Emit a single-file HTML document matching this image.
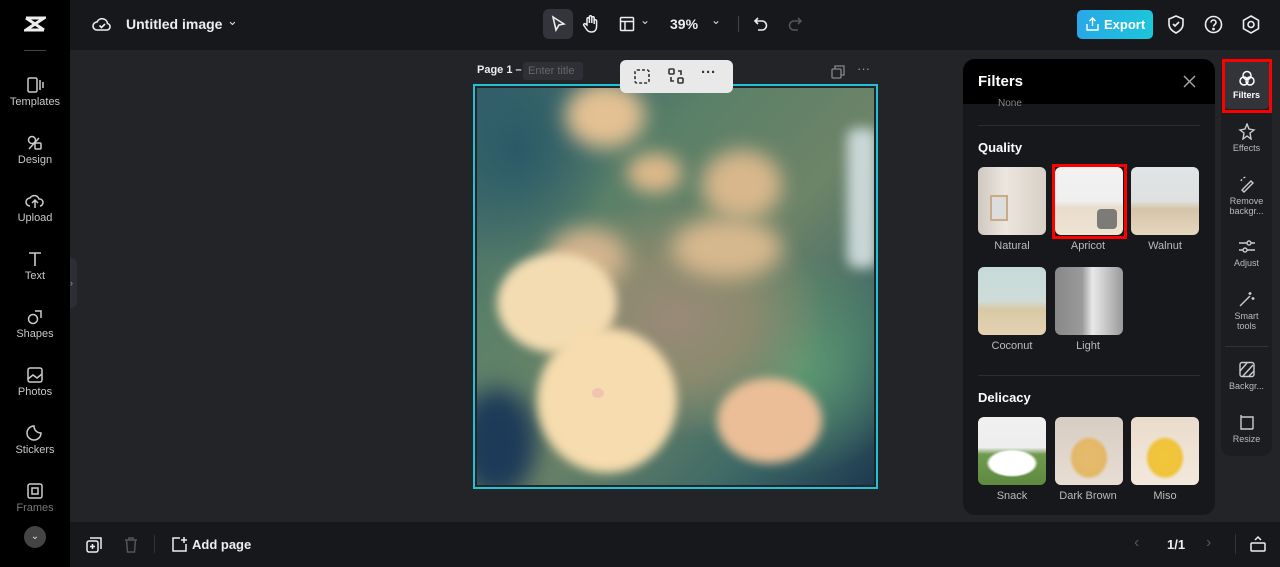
<!DOCTYPE html>
<html><head><meta charset="utf-8"><style>
*{box-sizing:border-box;margin:0;padding:0}
body{width:1280px;height:567px;overflow:hidden;background:#232428;font-family:"Liberation Sans",sans-serif;color:#ddd;position:relative}
.abs{position:absolute}
#top{left:70px;top:0;width:1210px;height:50px;background:#17181c}
#left{left:0;top:0;width:70px;height:567px;background:#000}
#bottom{left:70px;top:522px;width:1210px;height:45px;background:#17181c}
.nav{position:absolute;left:0;width:70px;text-align:center;font-size:11px;color:#c8c8c8}
.nav svg{display:block;margin:0 auto 3px}
.panel{left:963px;top:59px;width:252px;height:456px;background:#17181c;border-radius:12px;overflow:hidden}
.ph{height:45px;background:#000;padding:14px 15px;font-weight:bold;font-size:15px;color:#fff}
.th{position:absolute;width:68px;height:68px;border-radius:6px}
.lb{position:absolute;width:76px;text-align:center;font-size:11px;color:#bbb}
.sec{position:absolute;left:15px;font-weight:bold;font-size:13px;color:#fff}
.rs{left:1221px;top:59px;width:51px;height:397px;background:#1c1d21;border-radius:10px}
.ri{position:absolute;left:0;width:51px;text-align:center;font-size:9px;color:#bbb;line-height:10px}
.ri svg{display:block;margin:0 auto 3px}
.b{position:absolute;border-radius:50%}
</style></head><body>
<div id="left" class="abs">
 <svg class="abs" style="left:24px;top:14px" width="22" height="20" viewBox="0 0 22 20" fill="none" stroke="#eee" stroke-width="3"><path d="M2 4h18L2 16h18M2 4l18 12"/></svg>
 <div class="abs" style="left:24px;top:50px;width:22px;height:1px;background:#444"></div>
 <div class="nav" style="top:77px"><svg width="18" height="16" viewBox="0 0 18 16" fill="none" stroke="#ccc" stroke-width="1.5"><rect x="2" y="1" width="9" height="14" rx="1.5"/><path d="M14 3v10M17 5v6"/></svg>Templates</div>
 <div class="nav" style="top:135px"><svg width="18" height="16" viewBox="0 0 18 16" fill="none" stroke="#ccc" stroke-width="1.5"><circle cx="6" cy="5" r="3.5"/><rect x="9" y="8" width="6" height="6" rx="1"/><path d="M3 14l10-11"/></svg>Design</div>
 <div class="nav" style="top:193px"><svg width="20" height="16" viewBox="0 0 20 16" fill="none" stroke="#ccc" stroke-width="1.5"><path d="M5 13a4 4 0 010-8 5 5 0 019 1 3.5 3.5 0 011 7M10 15V8M7 10l3-3 3 3"/></svg>Upload</div>
 <div class="nav" style="top:251px"><svg width="18" height="16" viewBox="0 0 18 16" fill="none" stroke="#ccc" stroke-width="1.6"><path d="M3 2h12M9 2v13"/></svg>Text</div>
 <div class="nav" style="top:309px"><svg width="18" height="16" viewBox="0 0 18 16" fill="none" stroke="#ccc" stroke-width="1.5"><circle cx="7" cy="10" r="4.5"/><path d="M9 2l6 0 0 7"/></svg>Shapes</div>
 <div class="nav" style="top:367px"><svg width="18" height="16" viewBox="0 0 18 16" fill="none" stroke="#ccc" stroke-width="1.5"><rect x="2" y="1" width="14" height="14" rx="2"/><path d="M2 12l5-4 4 3 5-4"/></svg>Photos</div>
 <div class="nav" style="top:425px"><svg width="18" height="16" viewBox="0 0 18 16" fill="none" stroke="#ccc" stroke-width="1.5"><path d="M15 8a7 7 0 11-7-7c0 4 3 7 7 7z"/></svg>Stickers</div>
 <div class="nav" style="top:483px;color:#777"><svg width="18" height="16" viewBox="0 0 18 16" fill="none" stroke="#ccc" stroke-width="1.5"><rect x="2" y="1" width="14" height="14" rx="2"/><rect x="6" y="5" width="6" height="6"/></svg>Frames</div>
 <div class="abs" style="left:24px;top:526px;width:22px;height:22px;border-radius:50%;background:#444;color:#ddd;font-size:10px;text-align:center;line-height:22px">⌄</div>
</div>
<div class="abs" style="left:70px;top:258px;width:7px;height:50px;background:#2d2e33;border-radius:0 6px 6px 0;color:#999;font-size:9px;line-height:50px">›</div>
<div id="top" class="abs">
 <svg class="abs" style="left:22px;top:15px" width="20" height="18" viewBox="0 0 20 18" fill="none" stroke="#eee" stroke-width="1.6"><path d="M5 15a4 4 0 010-8 5.5 5.5 0 0110.5 1.5A3.3 3.3 0 0115 15z"/><path d="M7.5 10.5l2 2 3.5-3.5"/></svg>
 <div class="abs" style="left:56px;top:16px;font-weight:bold;font-size:14px;color:#eee">Untitled image</div>
 <div class="abs" style="left:157px;top:13px;font-size:13px;color:#ddd">⌄</div>
 <div class="abs" style="left:473px;top:9px;width:30px;height:30px;background:#34353b;border-radius:6px"></div>
 <svg class="abs" style="left:480px;top:15px" width="16" height="18" viewBox="0 0 16 18" fill="none" stroke="#eee" stroke-width="1.6"><path d="M3 2l11 7-5 1-3 5z"/></svg>
 <svg class="abs" style="left:512px;top:14px" width="18" height="20" viewBox="0 0 18 20" fill="none" stroke="#eee" stroke-width="1.5"><path d="M5 11V5a1.2 1.2 0 012.4 0v4V3a1.2 1.2 0 012.4 0v6V4a1.2 1.2 0 012.4 0v6V7a1.2 1.2 0 012.4 0v5c0 4-2 6-5 6s-4-1-6-4l-2-3a1.2 1.2 0 012-1z"/></svg>
 <svg class="abs" style="left:549px;top:16px" width="16" height="16" viewBox="0 0 16 16" fill="none" stroke="#eee" stroke-width="1.5"><rect x="1.5" y="1.5" width="13" height="13" rx="1"/><path d="M1.5 5.5h13M6 5.5v9"/></svg>
 <div class="abs" style="left:570px;top:13px;font-size:12px;color:#ddd">⌄</div>
 <div class="abs" style="left:600px;top:16px;font-weight:bold;font-size:14px;color:#eee">39%</div>
 <div class="abs" style="left:641px;top:13px;font-size:12px;color:#ddd">⌄</div>
 <div class="abs" style="left:668px;top:16px;width:1px;height:16px;background:#444"></div>
 <svg class="abs" style="left:683px;top:16px" width="16" height="16" viewBox="0 0 16 16" fill="none" stroke="#eee" stroke-width="1.6"><path d="M5 2L2 5l3 3M2 5h7a4.5 4.5 0 010 9H5"/></svg>
 <svg class="abs" style="left:717px;top:16px" width="16" height="16" viewBox="0 0 16 16" fill="none" stroke="#555" stroke-width="1.6"><path d="M11 2l3 3-3 3M14 5H7a4.5 4.5 0 000 9h4"/></svg>
 <div class="abs" style="left:1007px;top:10px;width:76px;height:29px;background:linear-gradient(90deg,#2aa7e8,#1cc6d9);border-radius:5px;color:#fff;font-weight:bold;font-size:13px;padding:7px 0 0 27px">Export</div>
 <svg class="abs" style="left:1016px;top:17px" width="13" height="14" viewBox="0 0 13 14" fill="none" stroke="#fff" stroke-width="1.4"><path d="M6.5 9V1M3.5 4l3-3 3 3M1 7v6h11V7"/></svg>
 <svg class="abs" style="left:1097px;top:15px" width="18" height="19" viewBox="0 0 18 19" fill="none" stroke="#eee" stroke-width="1.6"><path d="M9 1l7 3v5c0 4-3 7-7 9-4-2-7-5-7-9V4z"/><path d="M6 9l2 2 4-4"/></svg>
 <svg class="abs" style="left:1134px;top:15px" width="19" height="19" viewBox="0 0 19 19" fill="none" stroke="#eee" stroke-width="1.6"><circle cx="9.5" cy="9.5" r="8"/><path d="M7 7.5a2.5 2.5 0 115 0c0 2-2.5 2-2.5 4"/><circle cx="9.5" cy="14" r=".6" fill="#eee"/></svg>
 <svg class="abs" style="left:1172px;top:15px" width="18" height="19" viewBox="0 0 18 19" fill="none" stroke="#eee" stroke-width="1.6"><path d="M9 1l7.5 4.3v8.4L9 18 1.5 13.7V5.3z"/><circle cx="9" cy="9.5" r="3"/></svg>
</div>
<!-- image -->
<div class="abs" style="left:473px;top:84px;width:405px;height:405px;border:2px solid #22c1d6;padding:2px;background:#232428">
<div style="position:relative;width:100%;height:100%;overflow:hidden;background:
radial-gradient(ellipse 150px 120px at 50% 58%,#9a8a78 0,#8a8a6e 50%,transparent 100%),
radial-gradient(ellipse 120px 110px at 80% 70%,#5e9a72 0,transparent 100%),
radial-gradient(ellipse 100px 120px at 10% 15%,#2a5a68 0,transparent 100%),
linear-gradient(135deg,#35606a 0,#5a8068 30%,#6d8468 55%,#3f6a66 80%,#1d3a50 100%)">
 <div class="b" style="left:88px;top:-5px;width:80px;height:65px;background:#e4c193;filter:blur(10px)"></div>
 <div class="b" style="left:150px;top:65px;width:55px;height:40px;background:#dcb88b;filter:blur(9px)"></div>
 <div class="b" style="left:225px;top:62px;width:80px;height:70px;background:#d8b78c;filter:blur(10px)"></div>
 <div class="b" style="left:195px;top:130px;width:110px;height:60px;background:#d7b88e;filter:blur(11px)"></div>
 <div class="b" style="left:70px;top:140px;width:80px;height:60px;background:#d3b48e;filter:blur(11px)"></div>
 <div class="b" style="left:370px;top:40px;width:30px;height:140px;border-radius:10px;background:#c9d6d6;filter:blur(6px)"></div>
 <div class="b" style="left:-20px;top:300px;width:80px;height:110px;background:#1d3a58;filter:blur(12px)"></div>
 <div class="b" style="left:20px;top:165px;width:120px;height:100px;background:#f4dcb2;filter:blur(5px)"></div>
 <div class="b" style="left:60px;top:240px;width:140px;height:145px;background:#f6dcae;filter:blur(5px)"></div>
 <div class="b" style="left:240px;top:290px;width:105px;height:85px;background:#ebbe97;filter:blur(5px)"></div>
 <div class="b" style="left:115px;top:300px;width:12px;height:10px;background:#f0c4b0"></div>
</div></div>
<!-- page header -->
<div class="abs" style="left:477px;top:64px;font-weight:bold;font-size:11px;color:#eee">Page 1 –</div>
<div class="abs" style="left:523px;top:62px;width:60px;height:18px;background:#2f3035;border-radius:3px;font-size:11px;color:#666;padding:3px 0 0 5px">Enter title</div>
<div class="abs" style="left:620px;top:60px;width:113px;height:33px;background:#e9e9ea;border-radius:6px"></div>
<svg class="abs" style="left:633px;top:68px" width="18" height="17" viewBox="0 0 18 17" fill="none" stroke="#333" stroke-width="1.6" stroke-dasharray="3 2"><rect x="2" y="2" width="14" height="13" rx="2"/></svg>
<svg class="abs" style="left:668px;top:68px" width="16" height="16" viewBox="0 0 16 16" fill="none" stroke="#333" stroke-width="1.6"><rect x="1" y="1" width="5" height="5" rx="1"/><rect x="10" y="10" width="5" height="5" rx="1"/><path d="M10 3h3v4M6 13H3V9"/></svg>
<div class="abs" style="left:701px;top:64px;font-weight:bold;font-size:15px;color:#333">···</div>
<svg class="abs" style="left:831px;top:65px" width="14" height="14" viewBox="0 0 14 14" fill="none" stroke="#888" stroke-width="1.3"><rect x="1" y="4" width="9" height="9" rx="1"/><path d="M4 4V1h9v9h-3"/></svg>
<div class="abs" style="left:857px;top:61px;font-size:13px;color:#999">···</div>
<!-- filter panel -->
<div class="panel abs">
 <div class="ph">Filters</div>
 <svg class="abs" style="left:220px;top:16px" width="13" height="13" viewBox="0 0 13 13" stroke="#aaa" stroke-width="1.4"><path d="M1 1l11 11M12 1L1 12"/></svg>
 <div class="abs" style="left:35px;top:39px;font-size:10px;color:#888">None</div>
 <div class="abs" style="left:15px;top:66px;width:222px;height:1px;background:#2c2d31"></div>
 <div class="sec" style="top:81px">Quality</div>
 <div class="th" style="left:15px;top:108px;background:linear-gradient(90deg,#cfc8c0,#ece6de 40%,#d8d0c6);"><div style="position:absolute;left:12px;top:28px;width:18px;height:26px;border:2px solid #c8ac86;background:#ddd"></div></div>
 <div class="th" style="left:92px;top:108px;background:linear-gradient(180deg,#f2f2f2 0,#efefef 50%,#e8dccb 60%,#efe3d3)"><div style="position:absolute;right:6px;bottom:6px;width:20px;height:20px;border-radius:4px;background:#7d7b77"></div></div>
 <div class="abs" style="left:89px;top:105px;width:75px;height:75px;border:3px solid #f00"></div>
 <div class="th" style="left:168px;top:108px;background:linear-gradient(180deg,#e0e4e5 0,#dfe1e0 50%,#d5c4a8 62%,#e5d6be)"></div>
 <div class="lb" style="left:11px;top:181px">Natural</div>
 <div class="lb" style="left:87px;top:181px">Apricot</div>
 <div class="lb" style="left:164px;top:181px">Walnut</div>
 <div class="th" style="left:15px;top:208px;background:linear-gradient(180deg,#c5dbd9 0,#cfdcd8 50%,#d8c9a6 62%,#e4d2b2)"></div>
 <div class="th" style="left:92px;top:208px;background:linear-gradient(90deg,#888 0,#9a9a9a 40%,#e8e8e8 55%,#d0d0d0 70%,#999)"></div>
 <div class="lb" style="left:11px;top:281px">Coconut</div>
 <div class="lb" style="left:87px;top:281px">Light</div>
 <div class="abs" style="left:15px;top:316px;width:222px;height:1px;background:#2c2d31"></div>
 <div class="sec" style="top:331px">Delicacy</div>
 <div class="th" style="left:15px;top:358px;background:radial-gradient(ellipse 26px 14px at 50% 68%,#fff 0,#fff 85%,transparent 100%),linear-gradient(180deg,#f0f0f0 0,#eee 45%,#6f9a4e 55%,#5e8a40)"></div>
 <div class="th" style="left:92px;top:358px;background:radial-gradient(ellipse 20px 22px at 50% 60%,#e6bb6e 0,#e3b868 80%,transparent 100%),linear-gradient(180deg,#d8cdc3,#e8ddd2)"></div>
 <div class="th" style="left:168px;top:358px;background:radial-gradient(ellipse 20px 22px at 50% 60%,#f1c63a 0,#efc43c 80%,transparent 100%),linear-gradient(180deg,#eadccc,#f3e8dc)"></div>
 <div class="lb" style="left:11px;top:431px">Snack</div>
 <div class="lb" style="left:87px;top:431px">Dark Brown</div>
 <div class="lb" style="left:164px;top:431px">Miso</div>
</div>
<!-- right sidebar -->
<div class="rs abs">
 <div class="abs" style="left:2px;top:2px;width:47px;height:48px;background:#33343a;border-radius:6px"></div>
 <div class="abs" style="left:1px;top:0px;width:50px;height:54px;border:3px solid #f00"></div>
 <div class="ri" style="top:11px;color:#fff;font-weight:bold"><svg width="18" height="17" viewBox="0 0 18 17" fill="none" stroke="#fff" stroke-width="1.5"><circle cx="9" cy="5.5" r="4"/><circle cx="6" cy="11" r="4"/><circle cx="12" cy="11" r="4"/></svg>Filters</div>
 <div class="ri" style="top:64px"><svg width="18" height="17" viewBox="0 0 18 17" fill="none" stroke="#ccc" stroke-width="1.4"><path d="M9 1l2 5 5 1-4 3 1 6-4-3-4 3 1-6-4-3 5-1z"/></svg>Effects</div>
 <div class="ri" style="top:117px"><svg width="18" height="17" viewBox="0 0 18 17" fill="none" stroke="#ccc" stroke-width="1.4" ><path d="M4 14l9-9 2 2-9 9z"/><path d="M3 5a6 6 0 016-4" stroke-dasharray="2 2"/></svg>Remove<br>backgr...</div>
 <div class="ri" style="top:179px"><svg width="18" height="17" viewBox="0 0 18 17" fill="none" stroke="#ccc" stroke-width="1.4"><path d="M1 5h16M1 12h16"/><circle cx="11" cy="5" r="2" fill="#1c1d21"/><circle cx="7" cy="12" r="2" fill="#1c1d21"/></svg>Adjust</div>
 <div class="ri" style="top:232px"><svg width="18" height="17" viewBox="0 0 18 17" fill="none" stroke="#ccc" stroke-width="1.4"><path d="M2 15l10-10M12 1v3M10.5 2.5h3M15 6v3M13.5 7.5h3"/></svg>Smart<br>tools</div>
 <div class="abs" style="left:4px;top:287px;width:43px;height:1px;background:#333"></div>
 <div class="ri" style="top:302px"><svg width="18" height="17" viewBox="0 0 18 17" fill="none" stroke="#ccc" stroke-width="1.4"><rect x="2" y="1.5" width="14" height="14" rx="2"/><path d="M2 10l7-8M5 15l10-11M11 15l5-5"/></svg>Backgr...</div>
 <div class="ri" style="top:355px"><svg width="18" height="17" viewBox="0 0 18 17" fill="none" stroke="#ccc" stroke-width="1.4"><path d="M3 1v14h12M3 3h12v12"/></svg>Resize</div>
</div>
<div id="bottom" class="abs">
 <svg class="abs" style="left:16px;top:15px" width="16" height="16" viewBox="0 0 16 16" fill="none" stroke="#eee" stroke-width="1.5"><rect x="1" y="4" width="11" height="11" rx="2"/><path d="M4 1h11v11M6.5 7v5M4 9.5h5"/></svg>
 <svg class="abs" style="left:54px;top:15px" width="14" height="16" viewBox="0 0 14 16" fill="none" stroke="#555" stroke-width="1.5"><path d="M1 3h12M5 3V1h4v2M2.5 3l1 12h7l1-12"/></svg>
 <div class="abs" style="left:84px;top:13px;width:1px;height:18px;background:#333"></div>
 <svg class="abs" style="left:101px;top:14px" width="17" height="17" viewBox="0 0 17 17" fill="none" stroke="#eee" stroke-width="1.5"><path d="M9 2H2v13h13V8"/><path d="M13 1v6M10 4h6"/></svg>
 <div class="abs" style="left:122px;top:15px;font-weight:bold;font-size:13px;color:#eee">Add page</div>
 <div class="abs" style="left:1064px;top:12px;font-size:16px;color:#555">‹</div>
 <div class="abs" style="left:1097px;top:15px;font-weight:bold;font-size:13px;color:#eee">1/1</div>
 <div class="abs" style="left:1136px;top:12px;font-size:16px;color:#555">›</div>
 <div class="abs" style="left:1165px;top:12px;width:1px;height:20px;background:#333"></div>
 <svg class="abs" style="left:1179px;top:13px" width="18" height="18" viewBox="0 0 18 18" fill="none" stroke="#eee" stroke-width="1.5"><rect x="2" y="8" width="14" height="8" rx="1"/><path d="M6 5l3-3 3 3"/></svg>
</div>
</body></html>
